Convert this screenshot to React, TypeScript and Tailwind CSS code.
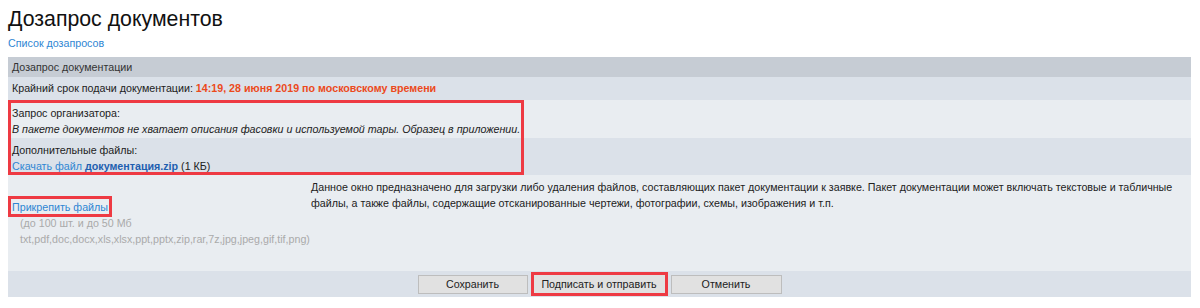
export default function App() {
  return (
    <div className="w-[1200px] h-[308px] bg-white px-2 font-['Liberation_Sans',Arial,sans-serif] text-[10.7px] text-[#222] overflow-hidden">
      {/* Title */}
      <h1 className="pt-[6px] text-[21.3px] leading-[26px] text-[#111]">Дозапрос документов</h1>
      <div className="mt-[4px] leading-[14px]">
        <a className="text-[#2f86d3]">Список дозапросов</a>
      </div>

      {/* Table */}
      <div className="mt-[7px] w-[1183px]">
        <div className="h-[20px] bg-[#c6ccd4] px-[4px] flex items-center text-[#333]">Дозапрос документации</div>
        <div className="h-[23px] bg-[#dbe1e9] px-[4px] flex items-center">
          Крайний срок подачи документации:&nbsp;
          <span className="font-bold text-[#ec4a1c]">14:19, 28 июня 2019 по московскому времени</span>
        </div>

        <div className="relative">
          <div className="h-[38px] bg-[#e9edf1] px-[4px] pt-[5px] leading-[16px]">
            <div>Запрос организатора:</div>
            <div className="italic">В пакете документов не хватает описания фасовки и используемой тары. Образец в приложении.</div>
          </div>
          <div className="h-[37px] bg-[#dbe1e9] px-[4px] pt-[4px] leading-[16px]">
            <div>Дополнительные файлы:</div>
            <div>
              <a className="text-[#2f86d3]">Скачать файл </a>
              <a className="font-bold text-[#1f5fb0]">документация.zip</a> (1 КБ)
            </div>
          </div>
          {/* annotation */}
          <div className="absolute left-0 top-0 w-[516px] h-[75px] border-[3px] border-[#ee3a43]" />
        </div>

        <div className="h-[96px] bg-[#e9edf1] flex">
          <div className="w-[302px] px-[4px] pt-[24px] leading-[16px]">
            <span className="relative inline-block">
              <a className="text-[#2f86d3]">Прикрепить файлы</a>
              <span className="absolute -left-[4px] -top-[3px] -right-[4px] -bottom-[2px] border-[3px] border-[#ee3a43]" />
            </span>
            <div className="pl-[8px] text-[#aaa]">(до 100 шт. и до 50 Мб</div>
            <div className="pl-[8px] text-[#aaa]">txt,pdf,doc,docx,xls,xlsx,ppt,pptx,zip,rar,7z,jpg,jpeg,gif,tif,png)</div>
          </div>
          <div className="flex-1 pt-[4px] pl-[1px] pr-[10px] leading-[16px] text-[#222]">
            Данное окно предназначено для загрузки либо удаления файлов, составляющих пакет документации к заявке. Пакет документации может включать текстовые и табличные файлы, а также файлы, содержащие отсканированные чертежи, фотографии, схемы, изображения и т.п.
          </div>
        </div>

        <div className="h-[26px] bg-[#dbe1e9] flex items-center justify-center gap-[3px]">
          <button className="w-[110px] h-[19px] bg-[#e1e1e1] border border-[#bdbdbd] text-[10.7px] text-[#222]">Сохранить</button>
          <button className="w-[137px] h-[24px] bg-[#e1e1e1] border-[3px] border-[#ee3a43] text-[10.7px] text-[#222]">Подписать и отправить</button>
          <button className="w-[111px] h-[19px] bg-[#e1e1e1] border border-[#bdbdbd] text-[10.7px] text-[#222]">Отменить</button>
        </div>
      </div>
    </div>
  );
}
